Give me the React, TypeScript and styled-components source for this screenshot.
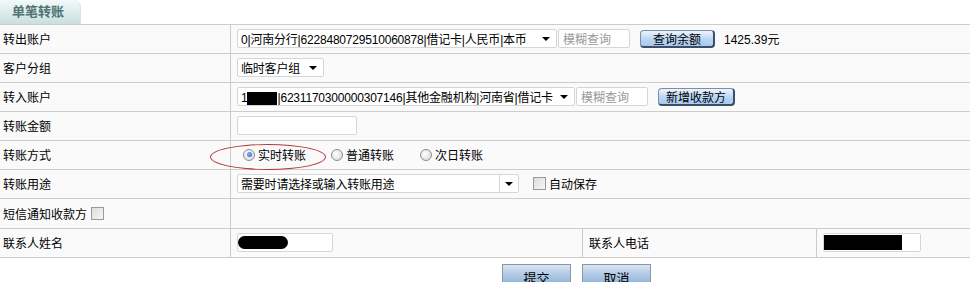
import styled, { createGlobalStyle } from 'styled-components';

const GlobalStyle = createGlobalStyle`
    body {
        margin: 0;
        background: #fff;
        font-family: "Liberation Sans", "Noto Sans CJK SC", sans-serif;
        font-size: 12px;
        color: #000;
    }
`;

const Page = styled.div`
    width: 970px;
    position: relative;
`;

const TabBar = styled.div`
    height: 24px;
    display: flex;
    align-items: flex-end;
`;

const Tab = styled.div`
    width: 81px;
    height: 24px;
    box-sizing: border-box;
    padding-left: 12px;
    line-height: 23px;
    font-size: 13px;
    font-weight: bold;
    color: #4f7272;
    border-top-right-radius: 7px;
    background: linear-gradient(#f4f9f9, #c9dfdf);
    border-right: 1px solid #d6e4e4;
`;

const Table = styled.table`
    width: 970px;
    border-collapse: collapse;
    background: #fafafa;
`;

const Row = styled.tr<{ $h?: number }>`
    height: ${p => p.$h || 29}px;
    border-top: 1px solid #cccccc;
    border-bottom: 1px solid #cccccc;
`;

const Label = styled.td<{ $w?: number }>`
    width: ${p => p.$w || 227}px;
    padding: 0 0 1px 3px;
    border-right: 1px solid #cccccc;
    white-space: nowrap;
`;

const Cell = styled.td<{ $w?: number }>`
    ${p => (p.$w ? `width: ${p.$w}px;` : '')}
    padding: 0 0 1px 6px;
    white-space: nowrap;
    border-right: 1px solid #cccccc;
    &:last-child { border-right: none; }
`;

const Line = styled.div`
    display: flex;
    align-items: center;
`;

const RadioLine = styled(Line)`
    padding-left: 6px;
`;

const SelectBox = styled.div<{ $w: number }>`
    width: ${p => p.$w}px;
    height: 19px;
    box-sizing: border-box;
    border: 1px solid #d6d6d6;
    border-radius: 2px;
    background: #fff;
    display: flex;
    align-items: center;
    padding-left: 3px;
    font-size: 12px;
    overflow: hidden;
`;

const SelectText = styled.span`
    flex: 1;
    overflow: hidden;
    letter-spacing: -0.2px;
`;

const Arrow = styled.span`
    width: 0;
    height: 0;
    margin: 0 6px 0 4px;
    border-left: 4px solid transparent;
    border-right: 4px solid transparent;
    border-top: 4px solid #000;
`;

const ComboArrow = styled.span`
    width: 18px;
    height: 100%;
    border-left: 1px solid #d6d6d6;
    display: flex;
    align-items: center;
    justify-content: center;
    &::after {
        content: '';
        border-left: 4px solid transparent;
        border-right: 4px solid transparent;
        border-top: 4px solid #000;
    }
`;

const TextInput = styled.div<{ $w: number; $ml?: number }>`
    width: ${p => p.$w}px;
    height: 19px;
    margin-left: ${p => p.$ml || 0}px;
    box-sizing: border-box;
    border: 1px solid #d6d6d6;
    border-radius: 2px;
    background: #fff;
    display: flex;
    align-items: center;
    padding-left: 4px;
    color: #999;
    font-size: 12px;
    position: relative;
    overflow: hidden;
`;

const BlueButton = styled.div<{ $w: number; $ml: number }>`
    width: ${p => p.$w}px;
    height: 18px;
    margin-left: ${p => p.$ml}px;
    box-sizing: border-box;
    border: 1px solid #7a8ea8;
    border-right: 2px solid #3d4d66;
    border-bottom: 2px solid #3d4d66;
    border-radius: 4px;
    background: linear-gradient(#eef5fd, #b8d5f4 55%, #a7c9f0);
    display: flex;
    align-items: center;
    justify-content: center;
    font-size: 12px;
`;

const Amount = styled.span`
    margin-left: 9px;
`;

const Redact = styled.span<{ $w: number; $round?: boolean }>`
    display: inline-block;
    width: ${p => p.$w}px;
    height: 13px;
    background: #000;
    border-radius: ${p => (p.$round ? '7px' : '0')};
    vertical-align: middle;
`;

const RadioGroup = styled.label<{ $mr: number }>`
    display: inline-flex;
    align-items: center;
    margin-right: ${p => p.$mr}px;
`;

const Radio = styled.span<{ $on?: boolean }>`
    width: 10px;
    height: 10px;
    margin: 0 3px 0 0;
    border-radius: 50%;
    border: 1px solid #8e8e8e;
    background: radial-gradient(circle at 40% 40%, #ffffff, #d4d4d4);
    display: inline-flex;
    align-items: center;
    justify-content: center;
    &::after {
        content: '';
        width: 5px;
        height: 5px;
        border-radius: 50%;
        background: ${p => (p.$on ? 'radial-gradient(circle at 40% 40%, #7fb6ff, #1c5fc4)' : 'transparent')};
    }
`;

const Check = styled.span<{ $ml: number }>`
    display: inline-block;
    width: 11px;
    height: 11px;
    margin: 0 3px 0 ${p => p.$ml}px;
    border: 1px solid #9a9a9a;
    background: linear-gradient(135deg, #dcdcdc, #f7f7f7);
`;

const Ellipse = styled.div`
    position: absolute;
    left: 210px;
    top: 144px;
    width: 114px;
    height: 24px;
    border: 1px solid #b3373c;
    border-radius: 50%;
    pointer-events: none;
`;

const Actions = styled.div`
    display: flex;
    gap: 11px;
    padding: 6px 0 0 502px;
`;

const FlatButton = styled.div`
    width: 69px;
    height: 22px;
    box-sizing: border-box;
    border: 1px solid #8a97a6;
    background: linear-gradient(#d9e6f4, #aec8e3 50%, #8fb2da);
    display: flex;
    justify-content: center;
    padding-top: 3px;
    font-size: 13px;
`;

export default function App() {
    return (
        <Page>
            <GlobalStyle />
            <TabBar>
                <Tab>单笔转账</Tab>
            </TabBar>
            <Table>
                <tbody>
                    <Row>
                        <Label>转出账户</Label>
                        <Cell colSpan={3}>
                            <Line>
                                <SelectBox $w={320}>
                                    <SelectText>0|河南分行|6228480729510060878|借记卡|人民币|本币</SelectText>
                                    <Arrow />
                                </SelectBox>
                                <TextInput $w={72} $ml={1}>模糊查询</TextInput>
                                <BlueButton $w={75} $ml={10}>查询余额</BlueButton>
                                <Amount>1425.39元</Amount>
                            </Line>
                        </Cell>
                    </Row>
                    <Row>
                        <Label>客户分组</Label>
                        <Cell colSpan={3}>
                            <SelectBox $w={87}>
                                <SelectText>临时客户组</SelectText>
                                <Arrow />
                            </SelectBox>
                        </Cell>
                    </Row>
                    <Row>
                        <Label>转入账户</Label>
                        <Cell colSpan={3}>
                            <Line>
                                <SelectBox $w={338}>
                                    <SelectText>
                                        1<Redact $w={30} />|6231170300000307146|其他金融机构|河南省|借记卡
                                    </SelectText>
                                    <Arrow />
                                </SelectBox>
                                <TextInput $w={72} $ml={1}>模糊查询</TextInput>
                                <BlueButton $w={77} $ml={10}>新增收款方</BlueButton>
                            </Line>
                        </Cell>
                    </Row>
                    <Row>
                        <Label>转账金额</Label>
                        <Cell colSpan={3}>
                            <TextInput $w={120} />
                        </Cell>
                    </Row>
                    <Row>
                        <Label>转账方式</Label>
                        <Cell colSpan={3}>
                            <RadioLine>
                                <RadioGroup $mr={25}><Radio $on />实时转账</RadioGroup>
                                <RadioGroup $mr={26}><Radio />普通转账</RadioGroup>
                                <RadioGroup $mr={0}><Radio />次日转账</RadioGroup>
                            </RadioLine>
                        </Cell>
                    </Row>
                    <Row>
                        <Label>转账用途</Label>
                        <Cell colSpan={3}>
                            <Line>
                                <SelectBox $w={282}>
                                    <SelectText>需要时请选择或输入转账用途</SelectText>
                                    <ComboArrow />
                                </SelectBox>
                                <Check $ml={14} />
                                自动保存
                            </Line>
                        </Cell>
                    </Row>
                    <Row $h={30}>
                        <Label>
                            <Line>短信通知收款方<Check $ml={4} /></Line>
                        </Label>
                        <Cell colSpan={3} />
                    </Row>
                    <Row>
                        <Label>联系人姓名</Label>
                        <Cell $w={345}>
                            <TextInput $w={96}>
                                <Redact $w={50} $round style={{ marginLeft: -4 }} />
                            </TextInput>
                        </Cell>
                        <Cell $w={227}>联系人电话</Cell>
                        <Cell>
                            <TextInput $w={98}>
                                <Redact $w={78} style={{ marginLeft: -4, height: 15 }} />
                            </TextInput>
                        </Cell>
                    </Row>
                </tbody>
            </Table>
            <Actions>
                <FlatButton>提交</FlatButton>
                <FlatButton>取消</FlatButton>
            </Actions>
            <Ellipse />
        </Page>
    );
}
